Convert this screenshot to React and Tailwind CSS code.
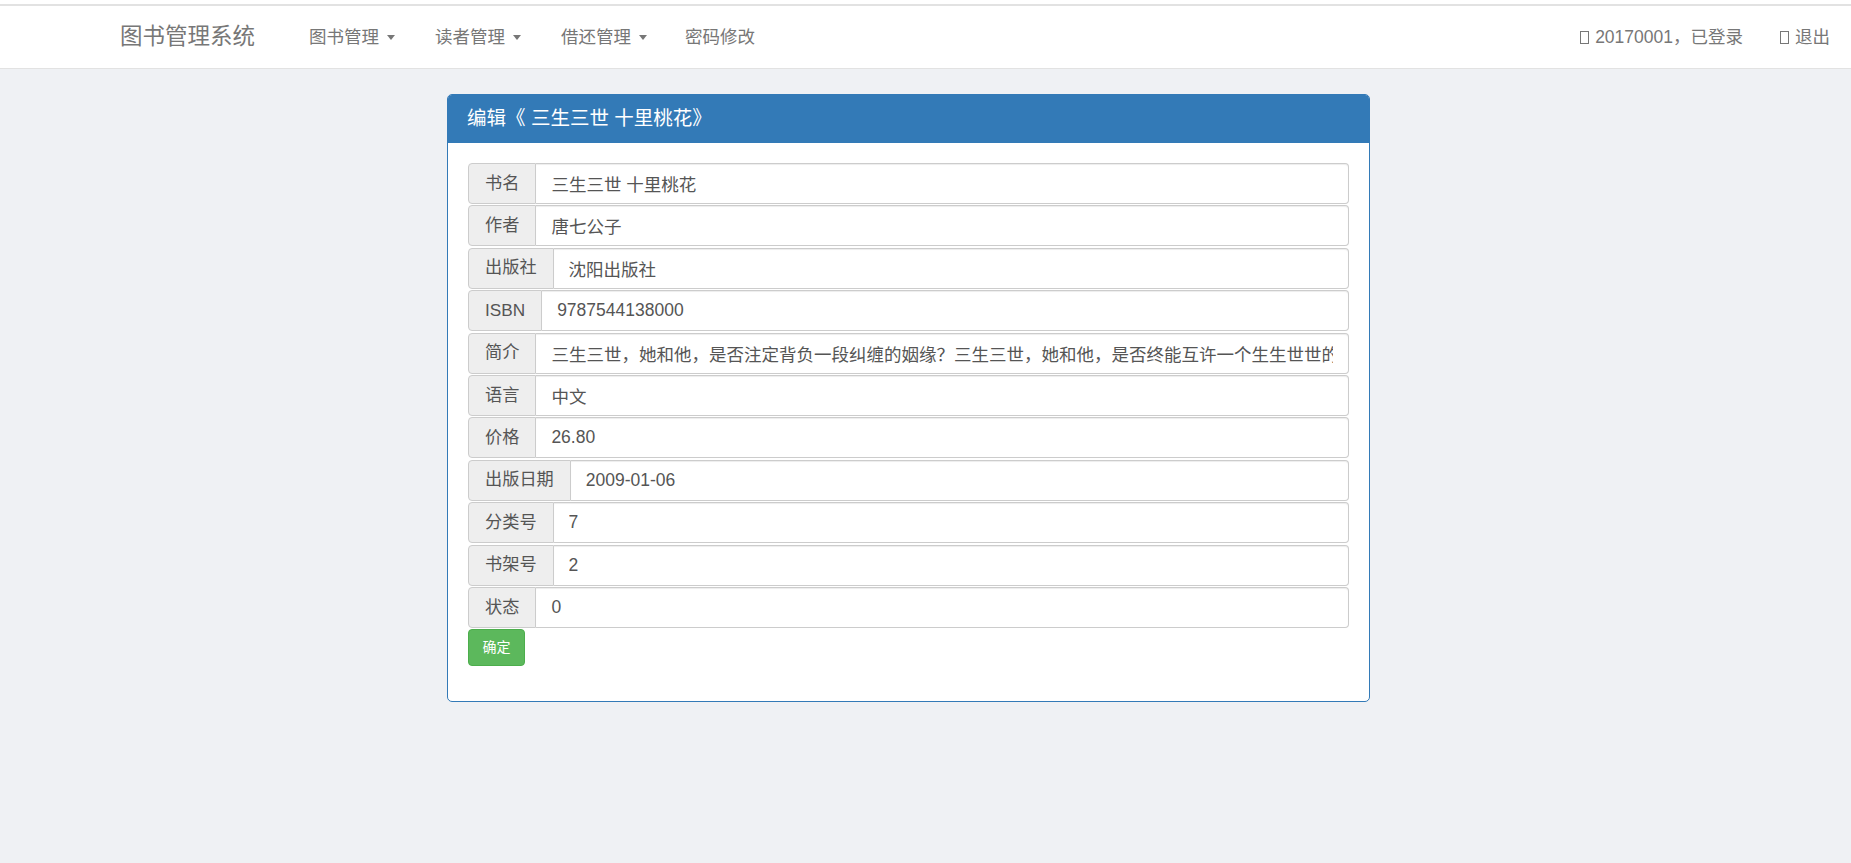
import React from "react";

const FONT = { fontFamily: '"Liberation Sans", Arial, "Noto Sans CJK SC", sans-serif' };

function Caret() {
  return (
    <span className="inline-block ml-[8px] align-middle w-0 h-0 border-t-[5px] border-t-[#777] border-x-[4px] border-x-transparent" />
  );
}

function Tofu() {
  return <span className="inline-block w-[9px] h-[13px] border border-[#777] mr-[6px] align-[-1px]" />;
}

const fields = [
  ["书名", "三生三世 十里桃花"],
  ["作者", "唐七公子"],
  ["出版社", "沈阳出版社"],
  ["ISBN", "9787544138000"],
  ["简介", "三生三世，她和他，是否注定背负一段纠缠的姻缘？三生三世，她和他，是否终能互许一个生生世世的承诺？"],
  ["语言", "中文"],
  ["价格", "26.80"],
  ["出版日期", "2009-01-06"],
  ["分类号", "7"],
  ["书架号", "2"],
  ["状态", "0"],
];

function Field({ label, value }) {
  return (
    <div className="flex h-[41px] w-full">
      <span className="flex items-center px-[16px] bg-[#eeeeee] border border-[#cccccc] rounded-l-[4px] text-[#555] text-[17.2px] whitespace-nowrap">
        {label}
      </span>
      <input
        readOnly
        defaultValue={value}
        className="flex-1 min-w-0 h-full border border-l-0 border-[#cccccc] rounded-r-[4px] px-[15px] text-[17.5px] text-[#555] bg-white shadow-[inset_0_1px_1px_rgba(0,0,0,0.075)] outline-none"
      />
    </div>
  );
}

export default function App() {
  return (
    <div className="min-h-screen bg-[#eff1f4]" style={FONT}>
      <div className="h-[4px] bg-white" />
      <nav className="h-[65px] bg-white border-t-2 border-b border-t-[#e2e2e2] border-b-[#e2e2e2] flex items-center text-[#777]">
        <span className="ml-[120px] text-[22.5px] leading-none">图书管理系统</span>
        <ul className="flex ml-[34px] text-[17.5px]">
          <li className="px-[20px] flex items-center">图书管理<Caret /></li>
          <li className="px-[20px] flex items-center">读者管理<Caret /></li>
          <li className="px-[20px] flex items-center">借还管理<Caret /></li>
          <li className="px-[18px] flex items-center">密码修改</li>
        </ul>
        <ul className="flex ml-auto mr-[2px] text-[17.5px]">
          <li className="px-[18px] flex items-center"><Tofu />20170001，已登录</li>
          <li className="px-[19px] flex items-center"><Tofu />退出</li>
        </ul>
      </nav>

      <div className="ml-[447px] mt-[25px] w-[923px] bg-white border border-[#337ab7] rounded-[5px]">
        <div className="h-[48px] bg-[#337ab7] rounded-t-[4px] flex items-center pl-[19px] text-white text-[19.5px]">
          编辑《 三生三世 十里桃花》
        </div>
        <div className="px-[20px] pt-[20px] pb-[35px]">
          <div className="flex flex-col gap-[1.4px]">
            {fields.map(([l, v]) => (
              <Field key={l} label={l} value={v} />
            ))}
          </div>
          <button className="mt-[1.4px] w-[57px] h-[37px] bg-[#5cb85c] border border-[#4cae4c] rounded-[4px] text-white text-[14px]">
            确定
          </button>
        </div>
      </div>
    </div>
  );
}
